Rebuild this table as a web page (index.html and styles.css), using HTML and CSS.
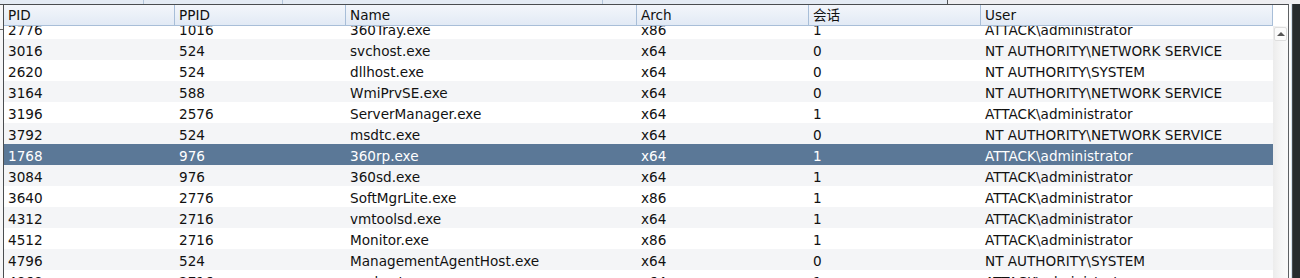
FILE: index.html
```html
<!DOCTYPE html>
<html lang="en">
<head>
<meta charset="utf-8">
<title>Process list</title>
<link rel="stylesheet" href="styles.css">
</head>
<body>
<div class="app">
  <div class="prev-strip">
    <div class="prev-cols">
      <div class="prev-col w1"></div>
      <div class="prev-col w2"></div>
      <div class="prev-col w3"></div>
      <div class="prev-col w4"></div>
    </div>
    <div class="prev-rest"></div>
  </div>
  <div class="main">
    <div class="gutter"><span class="tick"></span></div>
    <div class="frame">
      <div class="table">
        <div class="row head">
          <div class="cell">PID</div>
          <div class="cell">PPID</div>
          <div class="cell">Name</div>
          <div class="cell">Arch</div>
          <div class="cell">会话</div>
          <div class="cell">User</div>
        </div>
        <div class="viewport">
          <div class="rows">
            <div class="row"><div class="cell">2776</div><div class="cell">1016</div><div class="cell">360Tray.exe</div><div class="cell">x86</div><div class="cell">1</div><div class="cell">ATTACK\administrator</div></div>
            <div class="row alt"><div class="cell">3016</div><div class="cell">524</div><div class="cell">svchost.exe</div><div class="cell">x64</div><div class="cell">0</div><div class="cell">NT AUTHORITY\NETWORK SERVICE</div></div>
            <div class="row"><div class="cell">2620</div><div class="cell">524</div><div class="cell">dllhost.exe</div><div class="cell">x64</div><div class="cell">0</div><div class="cell">NT AUTHORITY\SYSTEM</div></div>
            <div class="row alt"><div class="cell">3164</div><div class="cell">588</div><div class="cell">WmiPrvSE.exe</div><div class="cell">x64</div><div class="cell">0</div><div class="cell">NT AUTHORITY\NETWORK SERVICE</div></div>
            <div class="row"><div class="cell">3196</div><div class="cell">2576</div><div class="cell">ServerManager.exe</div><div class="cell">x64</div><div class="cell">1</div><div class="cell">ATTACK\administrator</div></div>
            <div class="row alt"><div class="cell">3792</div><div class="cell">524</div><div class="cell">msdtc.exe</div><div class="cell">x64</div><div class="cell">0</div><div class="cell">NT AUTHORITY\NETWORK SERVICE</div></div>
            <div class="row selected"><div class="cell">1768</div><div class="cell">976</div><div class="cell">360rp.exe</div><div class="cell">x64</div><div class="cell">1</div><div class="cell">ATTACK\administrator</div></div>
            <div class="row alt"><div class="cell">3084</div><div class="cell">976</div><div class="cell">360sd.exe</div><div class="cell">x64</div><div class="cell">1</div><div class="cell">ATTACK\administrator</div></div>
            <div class="row"><div class="cell">3640</div><div class="cell">2776</div><div class="cell">SoftMgrLite.exe</div><div class="cell">x86</div><div class="cell">1</div><div class="cell">ATTACK\administrator</div></div>
            <div class="row alt"><div class="cell">4312</div><div class="cell">2716</div><div class="cell">vmtoolsd.exe</div><div class="cell">x64</div><div class="cell">1</div><div class="cell">ATTACK\administrator</div></div>
            <div class="row"><div class="cell">4512</div><div class="cell">2716</div><div class="cell">Monitor.exe</div><div class="cell">x86</div><div class="cell">1</div><div class="cell">ATTACK\administrator</div></div>
            <div class="row alt"><div class="cell">4796</div><div class="cell">524</div><div class="cell">ManagementAgentHost.exe</div><div class="cell">x64</div><div class="cell">0</div><div class="cell">NT AUTHORITY\SYSTEM</div></div>
            <div class="row"><div class="cell">4868</div><div class="cell">2716</div><div class="cell">conhost.exe</div><div class="cell">x64</div><div class="cell">1</div><div class="cell">ATTACK\administrator</div></div>
          </div>
        </div>
      </div>
      <div class="vscroll">
        <div class="vscroll-head"></div>
        <div class="vscroll-track">
          <div class="arrow-btn"><span class="arrow-up"></span></div>
        </div>
      </div>
    </div>
    <div class="rframe">
      <div class="rf-white"></div>
      <div class="rf-blue"></div>
      <div class="rf-dark"></div>
      <div class="rf-outer"></div>
    </div>
  </div>
</div>
</body>
</html>
```

FILE: styles.css
```css
* { box-sizing: border-box; }

html, body {
  margin: 0;
  padding: 0;
  width: 1300px;
  height: 278px;
  overflow: hidden;
  background: #f4f4f5;
}

body {
  font-family: "DejaVu Sans", "Noto Sans CJK SC", sans-serif;
  font-size: 13.6px;
  color: #111;
}

.app {
  width: 1300px;
  height: 278px;
  display: flex;
  flex-direction: column;
}

/* sliver of a previous table header at the very top */
.prev-strip {
  height: 4px;
  display: flex;
  flex: none;
}
.prev-cols {
  width: 948px;
  display: flex;
  background: #e4ebf4;
  border-right: 1px solid #4f5356;
}
.prev-col { height: 4px; border-right: 1px solid #b3c5da; }
.prev-col.w1 { width: 144px; }
.prev-col.w2 { width: 139px; }
.prev-col.w3 { width: 320px; }
.prev-col.w4 { flex: 1; border-right: none; }
.prev-rest { flex: 1; background: #eeeef1; }

.main {
  flex: 1;
  display: flex;
  min-height: 0;
}

.gutter {
  width: 3px;
  flex: none;
  background: #f6f6f7;
  border-top: 1px solid #4a4d50;
  position: relative;
}
.tick {
  position: absolute;
  left: 0;
  top: 24px;
  width: 3px;
  height: 1px;
  background: #6a6a6a;
}

.frame {
  width: 1286px;
  flex: none;
  display: flex;
  border-top: 1px solid #4a4d50;
  border-left: 1px solid #4a4d50;
  border-right: 1px solid #5e6164;
  background: #fff;
}

.table {
  width: 1269px;
  flex: none;
  display: flex;
  flex-direction: column;
}

.row {
  display: grid;
  grid-template-columns: 171px 171px 291px 172px 172px 292px;
  height: 21px;
  background: #fff;
}
.row.alt { background: #f4f5f7; }
.row.selected { background: #5b7897; color: #fff; }

.cell {
  padding: 3px 0 0 4px;
  line-height: 18px;
  white-space: nowrap;
  overflow: hidden;
}

.row.head {
  flex: none;
  background: linear-gradient(#f3f6fb, #e2eaf5);
  border-bottom: 1px solid #a8bed8;
}
.row.head .cell {
  padding: 0 0 0 4px;
  line-height: 20px;
  border-right: 1px solid #a8bed8;
}

.viewport {
  flex: 1;
  overflow: hidden;
}
.rows { margin-top: -8px; }

.vscroll {
  flex: 1;
  display: flex;
  flex-direction: column;
}
.vscroll-head {
  height: 21px;
  flex: none;
  background: #fff;
}
.vscroll-track {
  flex: 1;
  padding: 1px 0 0 1px;
  background: linear-gradient(to right, #ececec, #f6f6f6 55%, #fafafa);
}
.arrow-btn {
  width: 13px;
  height: 14px;
  border: 1px solid #dedede;
  border-radius: 2px;
  background: #fbfbfb;
  display: flex;
  align-items: center;
  justify-content: center;
}
.arrow-up {
  width: 0;
  height: 0;
  border-left: 4px solid transparent;
  border-right: 4px solid transparent;
  border-bottom: 4px solid #555;
}

.rframe {
  flex: 1;
  display: flex;
}
.rf-white { width: 2px; background: #fbfbfb; }
.rf-blue { width: 1px; background: #d3e0ee; }
.rf-dark { width: 1px; background: #45494c; }
.rf-outer { flex: 1; background: #262b2e; }
```
